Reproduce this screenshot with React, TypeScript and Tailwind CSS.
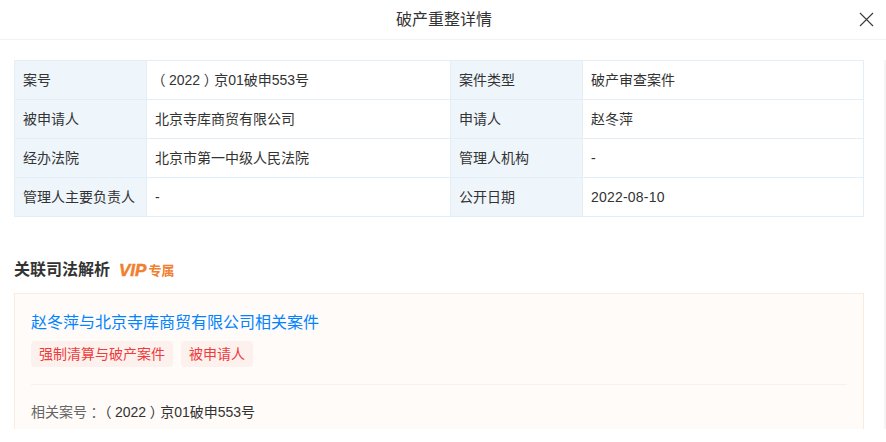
const font = { fontFamily: '"Liberation Sans", "Noto Sans CJK SC", sans-serif' };

function Punct({ children }: { children: string }) {
  return <span className="inline-block px-[3.5px] [font-feature-settings:'halt']">{children}</span>;
}

function CaseNo() {
  return (
    <span>
      <Punct>（</Punct>
      2022
      <Punct>）</Punct>
      京01破申553号
    </span>
  );
}

const rows = [
  ["案号", <CaseNo />, "案件类型", "破产审查案件"],
  ["被申请人", "北京寺库商贸有限公司", "申请人", "赵冬萍"],
  ["经办法院", "北京市第一中级人民法院", "管理人机构", "-"],
  ["管理人主要负责人", "-", "公开日期", <span className="tracking-[0.2px]">2022-08-10</span>],
];

export default function App() {
  return (
    <div className="w-[886px] h-[442px] bg-white overflow-hidden flex flex-col" style={font}>
      <header className="relative h-10 shrink-0 border-b border-[#f0f3f5] flex items-center justify-center pl-[2px] text-base text-[#333]">
        破产重整详情
        <svg className="absolute left-[859px] top-[12px] w-[15px] h-[15px]" viewBox="0 0 15 15" fill="none" stroke="#3a3a3a" strokeWidth="1.1">
          <path d="M1 1 14 14M14 1 1 14" />
        </svg>
      </header>
      <div className="flex h-[389px] shrink-0">
        <main className="w-[884px] pl-[14px] pt-5 overflow-hidden">
          <table className="w-[850px] table-fixed border-collapse text-sm leading-[22px] text-[#333]">
            <colgroup>
              <col className="w-[132px]" />
              <col className="w-[304px]" />
              <col className="w-[132px]" />
              <col />
            </colgroup>
            <tbody>
              {rows.map((r, i) => (
                <tr key={i} className="h-[39px]">
                  <td className="border border-[#e4eef6] bg-[#eef6fc] px-2">{r[0]}</td>
                  <td className="border border-[#e4eef6] px-2">{r[1]}</td>
                  <td className="border border-[#e4eef6] bg-[#eef6fc] px-2">{r[2]}</td>
                  <td className="border border-[#e4eef6] px-2">{r[3]}</td>
                </tr>
              ))}
            </tbody>
          </table>
          <div className="mt-[41px] flex items-center h-[24px]">
            <h2 className="text-base font-bold text-[#333]">关联司法解析</h2>
            <span className="ml-[9px] flex items-center text-[#f0802f] font-bold">
              <span className="text-[17px] italic leading-none [-webkit-text-stroke:0.5px_#f0802f]">VIP</span>
              <span className="text-[13px] ml-[2px] leading-none">专属</span>
            </span>
          </div>
          <section className="mt-[11px] w-[850px] h-[200px] border border-[#f9ebdf] bg-[#fffbf8] px-4 pt-[17px]">
            <div className="text-base leading-[24px] text-[#0084ff]">赵冬萍与北京寺库商贸有限公司相关案件</div>
            <div className="mt-[6px] flex gap-2">
              <span className="h-[26px] px-2 rounded-sm bg-[#fdf1ee] text-sm leading-[26px] text-[#ee3b3b]">强制清算与破产案件</span>
              <span className="h-[26px] px-2 rounded-sm bg-[#fdf1ee] text-sm leading-[26px] text-[#ee3b3b]">被申请人</span>
            </div>
            <div className="mt-[17px] border-t border-[#f9f1ea]" />
            <div className="mt-4 text-sm leading-[22px] text-[#333]">
              <span className="text-[#666]">相关案号<Punct>：</Punct></span>
              <CaseNo />
            </div>
          </section>
        </main>
        <div className="w-[2px] mt-5 bg-[#f5f5f5]" />
      </div>
    </div>
  );
}
